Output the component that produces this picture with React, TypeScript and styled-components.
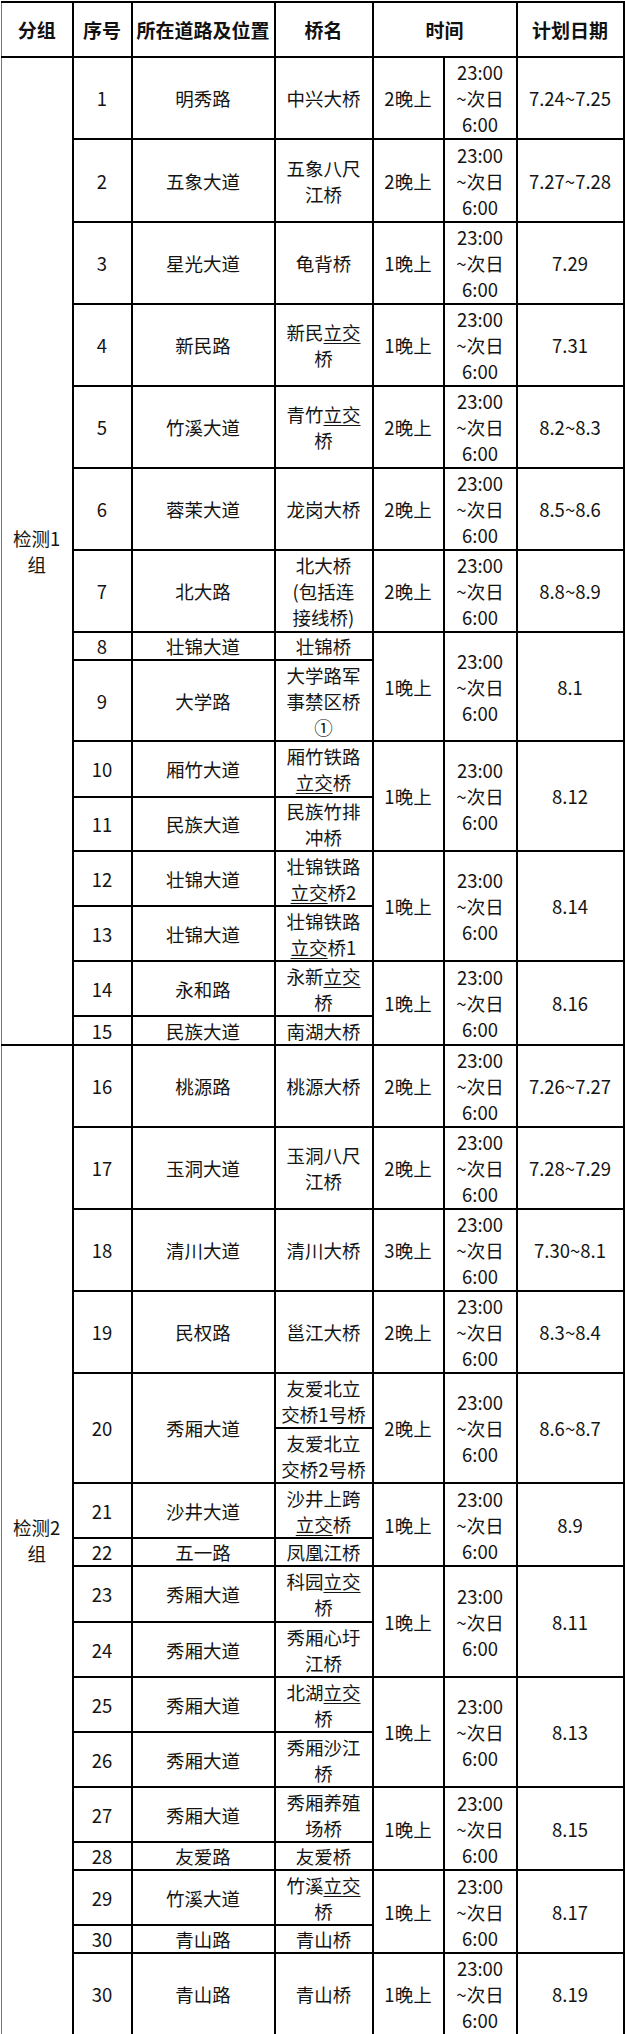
import React from "react";
import styled, { createGlobalStyle } from "styled-components";

const Global = createGlobalStyle`
  html, body { margin: 0; padding: 0; background: #ffffff; }
  body { font-family: "Noto Sans CJK SC", "Noto Sans", sans-serif; color: #141414; }
`;

const Page = styled.div`
  padding: 1px 0 0 1px;
  width: 625px;
  box-sizing: border-box;
`;

const Table = styled.table`
  border-collapse: collapse;
  table-layout: fixed;
  width: 622px;
  font-size: 18.5px;
  line-height: 26px;
`;

const Col = styled.col<{ $w: number }>`
  width: ${(p) => p.$w}px;
`;

const Tr = styled.tr<{ $h: number }>`
  height: ${(p) => p.$h}px;
`;

const Th = styled.th<{ $first?: boolean }>`
  border: 2px solid #000;
  ${(p) => (p.$first ? "border-left: 1px solid #777;" : "")}
  padding: 0;
  font-weight: 700;
  font-size: 19px;
  text-align: center;
  vertical-align: middle;
  white-space: nowrap;
  color: #111;
`;

const Td = styled.td<{ $first?: boolean }>`
  border: 2px solid #000;
  ${(p) => (p.$first ? "border-left: 1px solid #777;" : "")}
  padding: 0;
  text-align: center;
  vertical-align: middle;
  white-space: nowrap;
  font-weight: 400;
  overflow: visible;
`;

const Line = styled.div`
  display: block;
`;

const U = styled.span`
  text-decoration: underline;
  text-decoration-thickness: 1px;
  text-underline-offset: 3px;
`;

type R = {
  h: number;
  seq?: string;
  road?: string;
  bridge: string[];
  nights?: string;
  date?: string;
  span?: number;
  seqSpan?: number;
  skipSeq?: boolean;
};

const g1: R[] = [
  { h: 82, seq: "1", road: "明秀路", bridge: ["中兴大桥"], nights: "2晚上", date: "7.24~7.25" },
  { h: 83, seq: "2", road: "五象大道", bridge: ["五象八尺", "江桥"], nights: "2晚上", date: "7.27~7.28" },
  { h: 82, seq: "3", road: "星光大道", bridge: ["龟背桥"], nights: "1晚上", date: "7.29" },
  { h: 82, seq: "4", road: "新民路", bridge: ["新民立交", "桥"], nights: "1晚上", date: "7.31" },
  { h: 82, seq: "5", road: "竹溪大道", bridge: ["青竹立交", "桥"], nights: "2晚上", date: "8.2~8.3" },
  { h: 82, seq: "6", road: "蓉茉大道", bridge: ["龙岗大桥"], nights: "2晚上", date: "8.5~8.6" },
  { h: 82, seq: "7", road: "北大路", bridge: ["北大桥", "(包括连", "接线桥)"], nights: "2晚上", date: "8.8~8.9" },
  { h: 28, seq: "8", road: "壮锦大道", bridge: ["壮锦桥"], nights: "1晚上", date: "8.1", span: 2 },
  { h: 81, seq: "9", road: "大学路", bridge: ["大学路军", "事禁区桥", "①"] },
  { h: 56, seq: "10", road: "厢竹大道", bridge: ["厢竹铁路", "立交桥"], nights: "1晚上", date: "8.12", span: 2 },
  { h: 54, seq: "11", road: "民族大道", bridge: ["民族竹排", "冲桥"] },
  { h: 55, seq: "12", road: "壮锦大道", bridge: ["壮锦铁路", "立交桥2"], nights: "1晚上", date: "8.14", span: 2 },
  { h: 55, seq: "13", road: "壮锦大道", bridge: ["壮锦铁路", "立交桥1"] },
  { h: 55, seq: "14", road: "永和路", bridge: ["永新立交", "桥"], nights: "1晚上", date: "8.16", span: 2 },
  { h: 29, seq: "15", road: "民族大道", bridge: ["南湖大桥"] },
];

const g2: R[] = [
  { h: 82, seq: "16", road: "桃源路", bridge: ["桃源大桥"], nights: "2晚上", date: "7.26~7.27" },
  { h: 82, seq: "17", road: "玉洞大道", bridge: ["玉洞八尺", "江桥"], nights: "2晚上", date: "7.28~7.29" },
  { h: 82, seq: "18", road: "清川大道", bridge: ["清川大桥"], nights: "3晚上", date: "7.30~8.1" },
  { h: 82, seq: "19", road: "民权路", bridge: ["邕江大桥"], nights: "2晚上", date: "8.3~8.4" },
  { h: 55, seq: "20", road: "秀厢大道", bridge: ["友爱北立", "交桥1号桥"], nights: "2晚上", date: "8.6~8.7", span: 2, seqSpan: 2 },
  { h: 55, skipSeq: true, bridge: ["友爱北立", "交桥2号桥"] },
  { h: 55, seq: "21", road: "沙井大道", bridge: ["沙井上跨", "立交桥"], nights: "1晚上", date: "8.9", span: 2 },
  { h: 27, seq: "22", road: "五一路", bridge: ["凤凰江桥"] },
  { h: 56, seq: "23", road: "秀厢大道", bridge: ["科园立交", "桥"], nights: "1晚上", date: "8.11", span: 2 },
  { h: 55, seq: "24", road: "秀厢大道", bridge: ["秀厢心圩", "江桥"] },
  { h: 55, seq: "25", road: "秀厢大道", bridge: ["北湖立交", "桥"], nights: "1晚上", date: "8.13", span: 2 },
  { h: 55, seq: "26", road: "秀厢大道", bridge: ["秀厢沙江", "桥"] },
  { h: 55, seq: "27", road: "秀厢大道", bridge: ["秀厢养殖", "场桥"], nights: "1晚上", date: "8.15", span: 2 },
  { h: 28, seq: "28", road: "友爱路", bridge: ["友爱桥"] },
  { h: 55, seq: "29", road: "竹溪大道", bridge: ["竹溪立交", "桥"], nights: "1晚上", date: "8.17", span: 2 },
  { h: 28, seq: "30", road: "青山路", bridge: ["青山桥"] },
  { h: 82, seq: "30", road: "青山路", bridge: ["青山桥"], nights: "1晚上", date: "8.19" },
];

function renderLine(text: string) {
  const idx = text.indexOf("立交");
  if (idx < 0) return text;
  return (
    <>
      {text.slice(0, idx)}
      <U>立交</U>
      {text.slice(idx + 2)}
    </>
  );
}

function Lines({ items }: { items: string[] }) {
  return (
    <>
      {items.map((t, i) => (
        <Line key={i}>{renderLine(t)}</Line>
      ))}
    </>
  );
}

function Group({ label, rows }: { label: string; rows: R[] }) {
  return (
    <>
      {rows.map((r, i) => (
        <Tr key={i} $h={r.h}>
          {i === 0 && (
            <Td $first rowSpan={rows.length}>
              <Line>{label}</Line>
              <Line>组</Line>
            </Td>
          )}
          {!r.skipSeq && <Td rowSpan={r.seqSpan ?? 1}>{r.seq}</Td>}
          {!r.skipSeq && <Td rowSpan={r.seqSpan ?? 1}>{r.road}</Td>}
          <Td>
            <Lines items={r.bridge} />
          </Td>
          {r.nights && <Td rowSpan={r.span ?? 1}>{r.nights}</Td>}
          {r.nights && (
            <Td rowSpan={r.span ?? 1}>
              <Lines items={["23:00", "~次日", "6:00"]} />
            </Td>
          )}
          {r.date && <Td rowSpan={r.span ?? 1}>{r.date}</Td>}
        </Tr>
      ))}
    </>
  );
}

export default function App() {
  return (
    <Page>
      <Global />
      <Table>
        <colgroup>
          <Col $w={71} />
          <Col $w={59} />
          <Col $w={143} />
          <Col $w={98} />
          <Col $w={71} />
          <Col $w={73} />
          <Col $w={107} />
        </colgroup>
        <tbody>
          <Tr $h={55}>
            <Th $first>分组</Th>
            <Th>序号</Th>
            <Th>所在道路及位置</Th>
            <Th>桥名</Th>
            <Th colSpan={2}>时间</Th>
            <Th>计划日期</Th>
          </Tr>
          <Group label="检测1" rows={g1} />
          <Group label="检测2" rows={g2} />
        </tbody>
      </Table>
    </Page>
  );
}
